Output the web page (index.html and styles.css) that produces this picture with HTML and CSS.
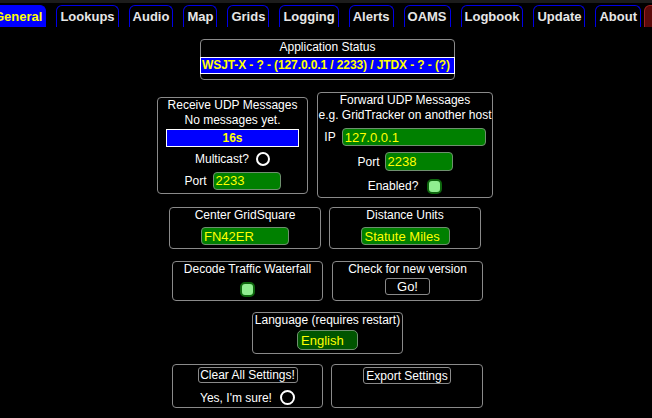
FILE: index.html
```html
<!DOCTYPE html>
<html>
<head>
<meta charset="utf-8">
<link rel="stylesheet" href="styles.css">
</head>
<body>
<div class="topstrip"></div>
<nav class="tabs">
  <div class="tab active">General</div>
  <div class="tab">Lookups</div>
  <div class="tab">Audio</div>
  <div class="tab">Map</div>
  <div class="tab">Grids</div>
  <div class="tab">Logging</div>
  <div class="tab">Alerts</div>
  <div class="tab">OAMS</div>
  <div class="tab">Logbook</div>
  <div class="tab">Update</div>
  <div class="tab">About</div>
  <div class="tab red"></div>
</nav>
<main class="content">
  <div class="row r0">
    <div class="box status">
      <div class="t">Application Status</div>
      <div class="bar wide">WSJT-X - ? - (127.0.0.1 / 2233) / JTDX - ? - (?)</div>
    </div>
  </div>

  <div class="row r1">
    <div class="box recv">
      <div class="t">Receive UDP Messages</div>
      <div class="t">No messages yet.</div>
      <div class="bar timer">16s</div>
      <div class="line mc"><span>Multicast?</span><span class="radio"></span></div>
      <div class="line rport"><span>Port</span><span class="input w68">2233</span></div>
    </div>
    <div class="box fwd">
      <div class="t">Forward UDP Messages</div>
      <div class="t">e.g. GridTracker on another host</div>
      <div class="line ip"><span>IP</span><span class="input w144">127.0.0.1</span></div>
      <div class="line fport"><span>Port</span><span class="input w68 h19">2238</span></div>
      <div class="line en"><span>Enabled?</span><span class="check"></span></div>
    </div>
  </div>

  <div class="row r2">
    <div class="box small">
      <div class="t">Center GridSquare</div>
      <span class="input w88 mt4">FN42ER</span>
    </div>
    <div class="box small">
      <div class="t">Distance Units</div>
      <span class="input sel w89 mt4">Statute Miles</span>
    </div>
  </div>

  <div class="row r3">
    <div class="box small h40">
      <div class="t t14">Decode Traffic Waterfall</div>
      <span class="check mt6"></span>
    </div>
    <div class="box small h40">
      <div class="t t14">Check for new version</div>
      <span class="btn go">Go!</span>
    </div>
  </div>

  <div class="row r4">
    <div class="box small">
      <div class="t">Language (requires restart)</div>
      <span class="input sel dark w61">English</span>
    </div>
  </div>

  <div class="row r5">
    <div class="box small h44">
      <span class="btn clear">Clear All Settings!</span>
      <div class="line sure"><span>Yes, I'm sure!</span><span class="radio r15"></span></div>
    </div>
    <div class="box small h44 w152">
      <span class="btn export">Export Settings</span>
    </div>
  </div>
</main>
</body>
</html>
```

FILE: styles.css
```css
html, body {
  margin: 0;
  padding: 0;
  background: #000;
  overflow: hidden;
}
body {
  width: 652px;
  height: 418px;
  font-family: "Liberation Sans", Arial, sans-serif;
  font-size: 12px;
  color: #fff;
}
.topstrip {
  height: 3px;
  background: #1c1c1c;
}
.tabs {
  display: flex;
  gap: 10px;
  margin-top: 2px;
  margin-left: -10px;
  height: 22px;
  white-space: nowrap;
  overflow: hidden;
  width: 672px;
}
.tab {
  flex: none;
  box-sizing: border-box;
  height: 22px;
  padding: 0 3px;
  border: 1px solid #0000e6;
  border-bottom: none;
  border-radius: 6px 6px 0 0;
  font-size: 13px;
  font-weight: bold;
  line-height: 21px;
  color: #e6e6e6;
}
.tab.active {
  background: #0000ff;
  border-color: #0000ff;
  color: #ffff00;
}
.tab.red {
  margin-left: -7px;
  background: #5a0a0a;
  border-color: #a02020;
  width: 20px;
}
.content {
  display: flex;
  flex-direction: column;
}
.row {
  display: flex;
  justify-content: center;
  align-items: center;
}
.r0 { margin-top: 12px; padding-left: 3px; }
.r1 { margin-top: 12px; gap: 9px; padding-right: 2px; }
.r2 { margin-top: 9px; gap: 8px; padding-right: 2px; }
.r3 { margin-top: 12px; gap: 9px; padding-left: 3px; }
.r4 { margin-top: 11px; padding-left: 3px; }
.r5 { margin-top: 10px; gap: 8px; padding-left: 3px; }

.box {
  box-sizing: border-box;
  border: 1px solid #8a8a8a;
  border-radius: 4px;
  display: flex;
  flex-direction: column;
  align-items: center;
}
.status { width: 255px; height: 41px; }
.recv { width: 151px; height: 97px; }
.fwd { width: 176px; height: 106px; }
.small { width: 152px; height: 42px; }
.small.h40 { width: 151px; height: 40px; }
.small.h44 { width: 151px; height: 44px; }
.small.h44.w152 { width: 152px; }
.r4 .small { width: 151px; }

.t {
  line-height: 15px;
  white-space: nowrap;
  text-align: center;
}
.t14 { line-height: 14px; }

.bar {
  box-sizing: border-box;
  background: #0000ff;
  border: 1px solid #fff;
  color: #ffff00;
  font-weight: bold;
  white-space: nowrap;
}
.bar.wide {
  width: 255px;
  height: 17px;
  margin-top: 2px;
  line-height: 15px;
  padding-left: 1px;
  letter-spacing: -0.1px;
}
.bar.timer {
  width: 133px;
  height: 18px;
  margin-top: 1px;
  line-height: 16px;
  text-align: center;
}

.line {
  display: flex;
  align-items: center;
  justify-content: center;
  white-space: nowrap;
}
.mc { margin-top: 4px; height: 16px; gap: 7px; }
.rport { margin-top: 5px; height: 18px; gap: 6px; }
.ip { margin-top: 5px; height: 18px; gap: 6px; }
.fport { margin-top: 6px; height: 19px; gap: 5px; }
.en { margin-top: 7px; height: 16px; gap: 9px; }
.sure { margin-top: 7px; height: 15px; gap: 8px; }

.input {
  box-sizing: border-box;
  display: flex;
  align-items: center;
  height: 18px;
  padding-left: 2px;
  background: #008000;
  border: 1px solid #6f8f6f;
  border-radius: 4px;
  color: #ffff00;
  font-size: 13px;
  white-space: nowrap;
}
.input.sel { padding-left: 3px; }
.input.dark {
  background: #005500;
  height: 20px;
  margin-top: 2px;
  padding-left: 3px;
  border-radius: 5px;
}
.h19 { height: 19px; }
.w68 { width: 68px; }
.w88 { width: 88px; }
.w89 { width: 89px; }
.w61 { width: 61px; }
.w144 { width: 144px; }
.mt4 { margin-top: 4px; }
.mt6 { margin-top: 6px; }

.radio {
  box-sizing: border-box;
  width: 14px;
  height: 14px;
  border: 2px solid #fff;
  border-radius: 50%;
  background: #000;
}
.radio.r15 { width: 15px; height: 15px; }
.check {
  box-sizing: border-box;
  display: block;
  width: 15px;
  height: 15px;
  background: #90ee90;
  border: 2px solid #0d660d;
  border-radius: 5px;
}

.btn {
  box-sizing: border-box;
  display: flex;
  align-items: center;
  justify-content: center;
  height: 17px;
  background: #000;
  border: 1px solid #8a8a8a;
  border-radius: 3px;
  color: #fff;
  white-space: nowrap;
}
.btn.go { width: 45px; margin-top: 2px; font-size: 13px; }
.btn.clear { width: 100px; margin-top: 2px; height: 16px; }
.btn.export { width: 88px; margin-top: 2px; }
```
